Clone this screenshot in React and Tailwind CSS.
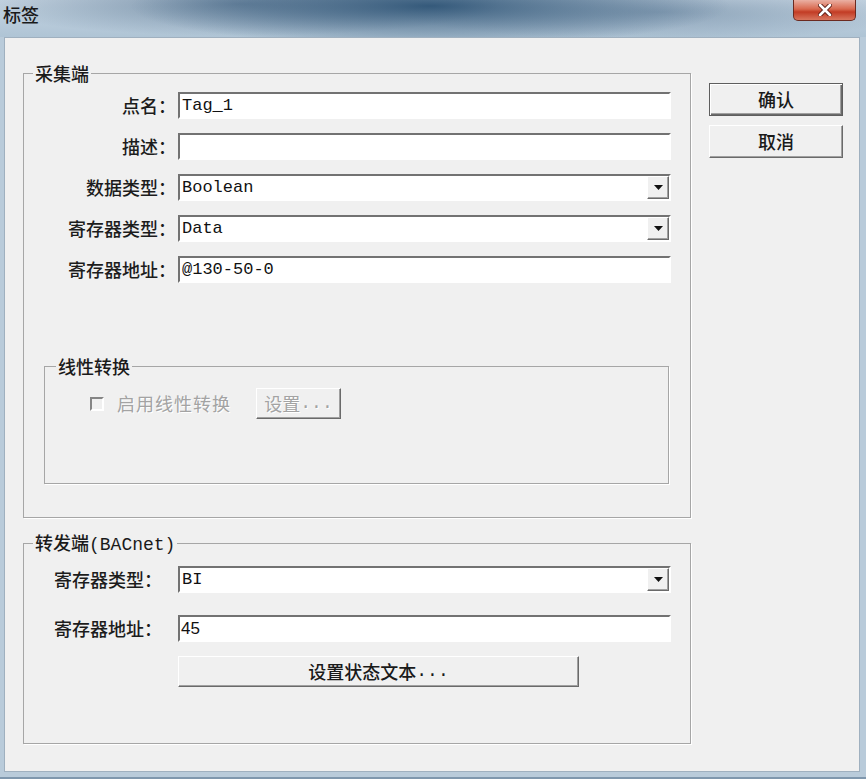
import React from 'react';

const cjk = "font-['Noto_Sans_CJK_SC',sans-serif]";
const mono = "font-['Liberation_Mono','Noto_Sans_CJK_SC',monospace]";

function DropButton() {
  return (
    <div className="flex w-[22px] shrink-0 items-center justify-center border border-t-white border-l-white border-r-[#6a6a6a] border-b-[#6a6a6a] bg-[#f0f0f0] shadow-[inset_-1px_-1px_0_#a0a0a0]">
      <svg width="9" height="5" viewBox="0 0 9 5">
        <path d="M0 0h9L4.5 5z" fill="#111" />
      </svg>
    </div>
  );
}

function Field({ value, combo, plain }) {
  return (
    <div className="flex h-[27px] w-[493px] border-2 border-t-[#727272] border-l-[#727272] border-r-white border-b-white bg-white">
      <div
        className={
          plain
            ? "flex flex-1 items-center pl-[1px] font-['Liberation_Sans',sans-serif] text-[17px] text-[#111]"
            : "flex flex-1 items-center pl-[2px] font-['Liberation_Mono',monospace] text-[17px] text-[#111]"
        }
      >
        {value}
      </div>
      {combo && <DropButton />}
    </div>
  );
}

function Row({ label, children }) {
  return (
    <div className="flex h-[27px] items-center">
      <div className={`w-[152px] text-right text-[18px] font-medium leading-[27px] text-[#1c1c1c] ${cjk}`}>{label}</div>
      <div className="ml-[2px]">{children}</div>
    </div>
  );
}

function Row2({ label, children }) {
  return (
    <div className="flex h-[27px] items-center">
      <div className={`w-[138px] text-right text-[18px] font-medium leading-[27px] text-[#1c1c1c] ${cjk}`}>{label}</div>
      <div className="ml-[16px]">{children}</div>
    </div>
  );
}

function CloseButton() {
  return (
    <div className="mr-[10px] flex h-[21px] w-[63px] items-center justify-center rounded-b-[5px] border border-t-0 border-[#6b2a20] bg-[linear-gradient(to_bottom,#eab0a3,#d9694f_45%,#c23c25_60%,#d8765e)]">
      <svg width="14" height="12" viewBox="0 0 14 12">
        <path d="M2 1l10 10M12 1L2 11" stroke="#5b1d14" strokeWidth="4.5" strokeLinecap="round" />
        <path d="M2 1l10 10M12 1L2 11" stroke="#fff" strokeWidth="2.6" strokeLinecap="round" />
      </svg>
    </div>
  );
}

export default function App() {
  return (
    <div className="flex h-[779px] w-[866px] flex-col border-b-2 border-[#7f97ad] bg-[#b9cbda]">
      <div className="flex h-[37px] shrink-0 items-start bg-[image:radial-gradient(ellipse_300px_40px_at_430px_6px,rgba(32,72,108,0.85),rgba(32,72,108,0)),radial-gradient(ellipse_260px_32px_at_240px_4px,rgba(70,100,130,0.6),rgba(70,100,130,0)),radial-gradient(ellipse_260px_28px_at_660px_12px,rgba(80,110,140,0.45),rgba(80,110,140,0)),linear-gradient(to_bottom,#c6d5e2,#afc4d5)]">
        <div className={`pl-[3px] pt-[4px] text-[18px] font-medium leading-[20px] text-[#1a1a1a] ${cjk}`}>标签</div>
        <div className="ml-auto">
          <CloseButton />
        </div>
      </div>

      <div className="mb-[5px] ml-[4px] mr-[6px] flex flex-1 border border-[#9fb0bf] bg-[#f0f0f0] pl-[18px] pt-[25px]">
        <div className="flex w-[668px] flex-col">
          <fieldset className="h-[455px] border border-[#a6a6a6] shadow-[1px_1px_0_#fff]">
            <legend className={`ml-[9px] px-[2px] text-[18px] font-medium leading-[20px] text-[#1a1a1a] ${cjk}`}>采集端</legend>
            <div className="flex flex-col gap-[14px] pt-[9px]">
              <Row label="点名：">
                <Field value="Tag_1" />
              </Row>
              <Row label="描述：">
                <Field value="" />
              </Row>
              <Row label="数据类型：">
                <Field value="Boolean" combo />
              </Row>
              <Row label="寄存器类型：">
                <Field value="Data" combo />
              </Row>
              <Row label="寄存器地址：">
                <Field value="@130-50-0" />
              </Row>
            </div>

            <fieldset className="ml-[20px] mt-[73px] h-[128px] w-[625px] border border-[#a6a6a6] shadow-[1px_1px_0_#fff]">
              <legend className={`ml-[11px] px-[2px] text-[18px] font-medium leading-[20px] text-[#1a1a1a] ${cjk}`}>线性转换</legend>
              <div className="flex items-center pl-[45px] pt-[12px]">
                <div className="h-[14px] w-[14px] border-2 border-t-[#858585] border-l-[#858585] border-r-white border-b-white bg-[#f0f0f0]" />
                <div className={`ml-[13px] text-[18px] leading-[31px] tracking-[1px] text-[#a3a3a3] [text-shadow:1px_1px_0_#fff] ${cjk}`}>启用线性转换</div>
                <div className={`ml-[25px] flex h-[31px] w-[85px] items-center justify-center border border-t-white border-l-white border-r-[#6a6a6a] border-b-[#6a6a6a] text-[18px] text-[#a3a3a3] shadow-[inset_-1px_-1px_0_#a0a0a0] [text-shadow:1px_1px_0_#fff] ${cjk}`}>
                  设置<span className={mono}>...</span>
                </div>
              </div>
            </fieldset>
          </fieldset>

          <fieldset className="mt-[14px] h-[212px] border border-[#a6a6a6] shadow-[1px_1px_0_#fff]">
            <legend className={`ml-[9px] px-[2px] text-[18px] font-medium leading-[20px] text-[#1a1a1a] ${cjk}`}>
              转发端<span className={mono}>(BACnet)</span>
            </legend>
            <div className="flex flex-col pt-[11px]">
              <Row2 label="寄存器类型：">
                <Field value="BI" combo />
              </Row2>
              <div className="mt-[22px]">
                <Row2 label="寄存器地址：">
                  <Field value="45" plain />
                </Row2>
              </div>
              <div className={`ml-[154px] mt-[14px] flex h-[31px] w-[401px] items-center justify-center border border-t-white border-l-white border-r-[#6a6a6a] border-b-[#6a6a6a] text-[18px] font-medium text-[#1a1a1a] shadow-[inset_-1px_-1px_0_#a0a0a0] ${cjk}`}>
                设置状态文本<span className={mono}>...</span>
              </div>
            </div>
          </fieldset>
        </div>

        <div className="ml-[18px] mt-[20px] flex flex-col gap-[9px]">
          <div className={`flex h-[33px] w-[134px] items-center justify-center border border-[#5e5e5e] text-[18px] font-medium text-[#1a1a1a] shadow-[inset_1px_1px_0_#fff,inset_-1px_-1px_0_#6a6a6a,inset_-2px_-2px_0_#a0a0a0] ${cjk}`}>
            确认
          </div>
          <div className={`flex h-[33px] w-[134px] items-center justify-center border border-t-white border-l-white border-r-[#6a6a6a] border-b-[#6a6a6a] text-[18px] font-medium text-[#1a1a1a] shadow-[inset_-1px_-1px_0_#a0a0a0] ${cjk}`}>
            取消
          </div>
        </div>
      </div>
    </div>
  );
}
